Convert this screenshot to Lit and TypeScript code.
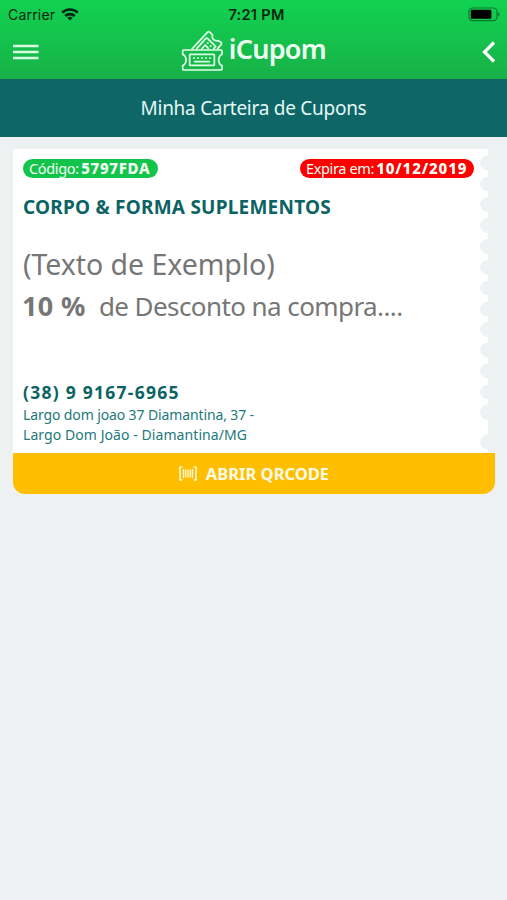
import { LitElement, html, css, svg } from "lit";

const SCALLOPS = [14, 35, 55.5, 76.5, 97.5, 118.5, 139, 160, 180.5, 201, 222, 243, 263, 293];

class StatusBar extends LitElement {
  static styles = css`
    :host { display: grid; grid-template-columns: 1fr auto 1fr; align-items: center; height: 28px; padding: 0 7px 0 8px; color: #04260f; font-family: "Inter", sans-serif; }
    .left { display: flex; align-items: center; gap: 6px; font-size: 14px; letter-spacing: 0.2px; }
    .time { margin-left: 5px; font-size: 14.5px; font-weight: 600; letter-spacing: 0.3px; }
    .right { display: flex; justify-content: flex-end; }
    svg { display: block; }
  `;
  render() {
    return html`
      <div class="left"><span>Carrier</span>
        <svg width="18" height="13" viewBox="0 0 18 13" fill="none" stroke="#04260f" stroke-width="2.6">
          <path d="M1.2 4.6a11.2 11.2 0 0 1 15.6 0M4.2 8a7 7 0 0 1 9.6 0"/>
          <path d="M9 12.6 6.4 10a3.8 3.8 0 0 1 5.2 0Z" fill="#04260f" stroke="none"/>
        </svg>
      </div>
      <div class="time">7:21 PM</div>
      <div class="right">
        <svg width="32" height="15" viewBox="0 0 32 15">
          <rect x="1" y="1" width="28" height="12.6" rx="3.6" fill="none" stroke="#0b7a30" stroke-width="1.2"/>
          <rect x="2.8" y="2.8" width="20.6" height="9" rx="1.4" fill="#000"/>
          <path d="M30 5v4.6a2.5 2.5 0 0 0 0-4.6Z" fill="#0b7a30"/>
        </svg>
      </div>`;
  }
}
customElements.define("status-bar", StatusBar);

class CouponCard extends LitElement {
  static styles = css`
    :host { display: block; width: 482px; color: #0b6363; }
    .body { position: relative; box-sizing: border-box; width: 475px; height: 304px; padding: 9.5px 14px 0 10px; background: #fff; }
    .badges { display: flex; justify-content: space-between; }
    .badge { display: flex; box-sizing: border-box; height: 19.5px; padding-left: 6px; border-radius: 10px; color: #f2fff5; font-size: 14.5px; line-height: 19.5px; letter-spacing: -0.35px; white-space: nowrap; }
    .badge b { margin-left: 2.5px; font-size: 15px; font-weight: 800; letter-spacing: 0.7px; }
    .code { width: 134.5px; background: #12c44a; }
    .due { width: 174px; background: #f00; }
    .due b { margin-left: 2px; letter-spacing: 0.9px; }
    .shop { margin-top: 17px; font-size: 19px; font-weight: 700; line-height: 24px; letter-spacing: 0.23px; }
    .offer { margin-top: 24px; color: #767676; line-height: 42.3px; white-space: nowrap; }
    .sample { font-size: 28.5px; letter-spacing: -0.05px; }
    .deal { display: flex; gap: 13px; font-size: 26px; letter-spacing: -0.58px; }
    .deal b { margin-left: -1px; font-size: 27px; letter-spacing: 0.4px; }
    .phone { margin-top: 52.4px; font-size: 17.5px; font-weight: 700; line-height: 24px; letter-spacing: 1.25px; }
    .address { margin-top: 1px; color: #23797a; font-size: 14px; line-height: 19.7px; letter-spacing: -0.12px; }
    .line2 { letter-spacing: 0.07px; }
    .edge { position: absolute; top: 0; right: 0; }
    .open { display: flex; align-items: center; justify-content: center; gap: 9px; height: 41px; border-radius: 0 0 12px 12px; background: #ffbf00; color: #fffbe8; font-size: 16.5px; font-weight: 700; }
  `;
  render() {
    return html`
      <div class="body">
        <div class="badges">
          <div class="badge code">Código:<b>5797FDA</b></div>
          <div class="badge due">Expira em:<b>10/12/2019</b></div>
        </div>
        <div class="shop">CORPO &amp; FORMA SUPLEMENTOS</div>
        <div class="offer">
          <div class="sample">(Texto de Exemplo)</div>
          <div class="deal"><b>10 %</b><span>de Desconto na compra....</span></div>
        </div>
        <div class="phone">(38) 9 9167-6965</div>
        <div class="address"><div>Largo dom joao 37 Diamantina, 37 -</div><div class="line2">Largo Dom João - Diamantina/MG</div></div>
        <svg class="edge" width="8" height="304" viewBox="0 0 8 304" fill="#eff2f3">
          ${SCALLOPS.map((y) => svg`<ellipse cx="8" cy=${y} rx="8" ry="7.4"/>`)}
        </svg>
      </div>
      <div class="open">
        <svg width="18" height="15" viewBox="0 0 18 15" fill="none" stroke="#fff6d2" stroke-width="1.6">
          <path d="M3.5 1H1v13h2.5M14.5 1H17v13h-2.5"/>
          <path d="M4.5 3v9M6.7 3.5v8M9 3.5v8M11.3 3.5v8M13.5 3v9" stroke-width="1.4"/>
        </svg>
        <span>ABRIR QRCODE</span>
      </div>`;
  }
}
customElements.define("coupon-card", CouponCard);

class AppRoot extends LitElement {
  static styles = css`
    :host { display: block; min-height: 900px; background: #edf1f2; font-family: "Noto Sans", sans-serif; }
    .top { height: 79px; background: linear-gradient(#11d250, #18b148); }
    .nav { display: grid; grid-template-columns: 1fr auto 1fr; align-items: center; height: 47px; padding: 0 11px 0 13px; }
    .brand { display: flex; align-items: center; gap: 5px; margin: -2px 2px 0 0; color: #effff3; font-size: 27px; font-weight: 600; letter-spacing: -0.75px; line-height: 40px; }
    .brand span { margin-top: -3px; }
    .back { justify-self: end; }
    .title { height: 56.5px; padding-top: 1px; background: #0e6766; color: #e4f7f6; font-size: 19px; letter-spacing: -0.27px; line-height: 57.5px; text-align: center; }
    main { padding: 12.5px 0 0 13px; }
    svg { display: block; }
  `;
  render() {
    return html`
      <div class="top">
        <status-bar></status-bar>
        <div class="nav">
          <svg width="26" height="18" viewBox="0 0 26 18" stroke="#d9ffe3" stroke-width="2.4"><path d="M0 3h25.5M0 9h25.5M0 15h25.5"/></svg>
          <div class="brand">
            <svg width="42.7" height="42" viewBox="33 90 128 126" fill="none" stroke="#e0ffe7" stroke-width="5.2" stroke-linejoin="round" stroke-linecap="round">
              <path d="M41 150H153q3 0 3 3v10q-10 4-10 17t10 17v9q0 4-4 4H42q-4 0-4-4v-9q10-4 10-17T38 163v-10q0-3 3-3Z"/>
              <rect x="59" y="163" width="74" height="33" rx="2"/>
              <path d="M74 185h44"/><path d="M71 174h50" stroke-dasharray="2 10"/>
              <path d="M67 146 112 97q4-4 8 0l8 8q-3 9 3 14t14 3l8 5q3 3 0 7l-10 12"/>
              <path d="M80 146 107 116q3-3 6 0l24 23-6 7M96 146l10-11 9 10"/>
              <path d="M113 129h.1M122 138h.1" stroke-width="6"/>
            </svg>
            <span>iCupom</span>
          </div>
          <svg class="back" width="14" height="22" viewBox="0 0 14 22" fill="none" stroke="#fff" stroke-width="3.2"><path d="M12 1.5 2.5 11l9.5 9.5"/></svg>
        </div>
      </div>
      <div class="title">Minha Carteira de Cupons</div>
      <main><coupon-card></coupon-card></main>`;
  }
}
customElements.define("app-root", AppRoot);
